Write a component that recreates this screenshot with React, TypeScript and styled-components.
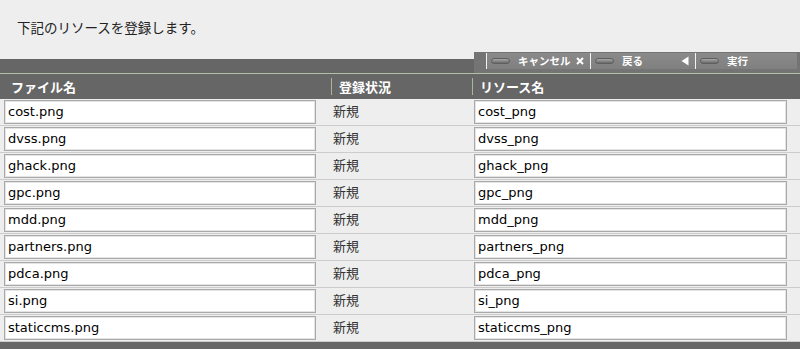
import React from "react";
import styled, { createGlobalStyle } from "styled-components";

const files = [
  "cost",
  "dvss",
  "ghack",
  "gpc",
  "mdd",
  "partners",
  "pdca",
  "si",
  "staticcms",
];

const GlobalStyle = createGlobalStyle`
  html, body {
    margin: 0;
    padding: 0;
    background: #eeeeee;
  }
  body {
    font-family: "DejaVu Sans", "Noto Sans CJK JP", sans-serif;
    color: #222;
  }
`;

const Page = styled.div`
  width: 800px;
  height: 349px;
  overflow: hidden;
  background: #eeeeee;
`;

const Intro = styled.div`
  height: 52px;
  box-sizing: border-box;
  padding: 18px 0 0 17px;
  font-family: "Noto Sans CJK JP", sans-serif;
  font-size: 13.5px;
  line-height: 18px;
  color: #222;
`;

const TopBar = styled.div`
  display: flex;
  align-items: flex-end;
  height: 21px;
`;

const BarFiller = styled.div`
  flex: 1;
  height: 14px;
  background: #666666;
`;

const Toolbar = styled.div`
  width: 326px;
  height: 21px;
  box-sizing: border-box;
  padding: 1px 3px 0 12px;
  display: flex;
  align-items: flex-start;
  background: #747474;
`;

const ToolButton = styled.div<{ $width: number }>`
  width: ${(p) => p.$width}px;
  height: 16px;
  box-sizing: border-box;
  display: flex;
  align-items: center;
  padding: 0 6px 0 4px;
  border-left: 1px solid #f2f2f2;
  background: linear-gradient(#8a8a8a, #808080);
  font-family: "Noto Sans CJK JP", sans-serif;
  font-weight: bold;
  font-size: 10.5px;
  color: #ffffff;
`;

const Pill = styled.span`
  width: 19px;
  height: 6px;
  box-sizing: border-box;
  border-radius: 3px;
  border: 1px solid #5e5e5e;
  background: linear-gradient(#a6a6a6, #6a6a6a);
  margin-right: 8px;
  flex-shrink: 0;
`;

const ButtonLabel = styled.span`
  flex: 1;
  line-height: 14px;
`;

const GreenLine = styled.div`
  height: 1px;
  background: #b3c0a4;
`;

const Grid = styled.div`
  display: grid;
  grid-template-columns: 331px 141px 1fr;
`;

const HeaderRow = styled(Grid)`
  height: 25px;
  background: #666666;
  align-items: center;
`;

const HeaderCell = styled.div<{ $divider?: boolean }>`
  position: relative;
  padding-left: ${(p) => (p.$divider ? 8 : 11)}px;
  font-family: "Noto Sans CJK JP", sans-serif;
  font-weight: bold;
  font-size: 13px;
  color: #ffffff;
  line-height: 25px;
  &::before {
    content: "";
    display: ${(p) => (p.$divider ? "block" : "none")};
    position: absolute;
    left: 0;
    top: 4px;
    width: 1px;
    height: 17px;
    background: #aab89a;
  }
`;

const Row = styled(Grid)`
  height: 27px;
  box-sizing: border-box;
  padding: 1px 0;
  border-bottom: 1px solid #cccccc;
  align-items: center;
`;

const TextBox = styled.div<{ $left: number; $width: number }>`
  margin-left: ${(p) => p.$left}px;
  width: ${(p) => p.$width}px;
  height: 24px;
  box-sizing: border-box;
  border: 1px solid #a9a9a9;
  box-shadow: inset 0 0 0 1px #e4e4e4;
  background: #ffffff;
  padding-left: 3px;
  font-size: 13px;
  line-height: 22px;
  color: #000;
  white-space: nowrap;
  overflow: hidden;
`;

const Status = styled.div`
  padding-left: 2px;
  font-family: "Noto Sans CJK JP", sans-serif;
  font-size: 13px;
  color: #333;
  margin-top: -4px;
`;

const Footer = styled.div`
  height: 10px;
  background: #666666;
`;

function CloseIcon() {
  return (
    <svg width="8" height="8" viewBox="0 0 8 8">
      <path d="M1 1L7 7M7 1L1 7" stroke="#fff" strokeWidth="2" />
    </svg>
  );
}

function BackIcon() {
  return (
    <svg width="8" height="10" viewBox="0 0 8 10">
      <polygon points="7.5,0.5 7.5,9.5 0.5,5" fill="#fff" />
    </svg>
  );
}

export default function App() {
  return (
    <Page>
      <GlobalStyle />
      <Intro>下記のリソースを登録します。</Intro>
      <TopBar>
        <BarFiller />
        <Toolbar>
          <ToolButton $width={104}>
            <Pill />
            <ButtonLabel>キャンセル</ButtonLabel>
            <CloseIcon />
          </ToolButton>
          <ToolButton $width={105}>
            <Pill />
            <ButtonLabel>戻る</ButtonLabel>
            <BackIcon />
          </ToolButton>
          <ToolButton $width={102}>
            <Pill />
            <ButtonLabel>実行</ButtonLabel>
          </ToolButton>
        </Toolbar>
      </TopBar>
      <GreenLine />
      <HeaderRow>
        <HeaderCell>ファイル名</HeaderCell>
        <HeaderCell $divider>登録状況</HeaderCell>
        <HeaderCell $divider>リソース名</HeaderCell>
      </HeaderRow>
      {files.map((name) => (
        <Row key={name}>
          <TextBox $left={4} $width={312}>
            {name}.png
          </TextBox>
          <Status>新規</Status>
          <TextBox $left={2} $width={313}>
            {name}_png
          </TextBox>
        </Row>
      ))}
      <Footer />
    </Page>
  );
}
